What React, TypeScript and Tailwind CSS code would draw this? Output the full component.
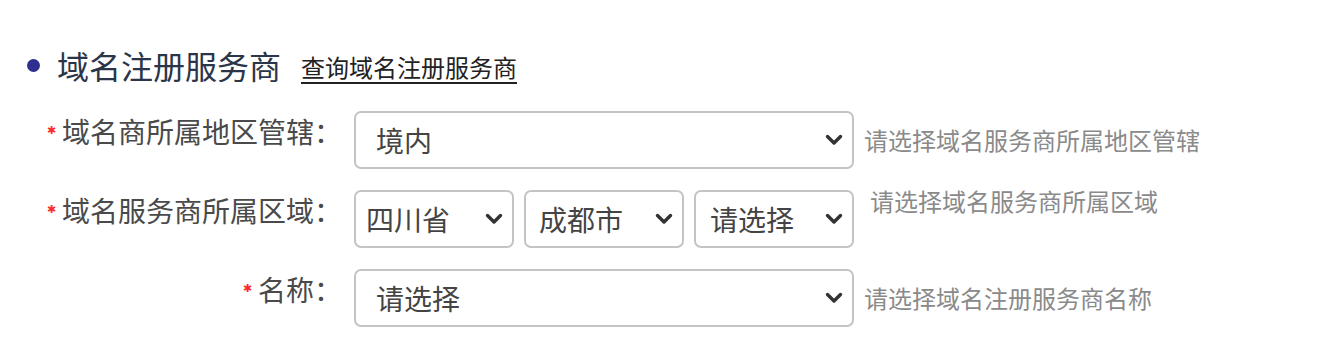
import React from "react";

const font = { fontFamily: '"Noto Sans CJK SC", "Noto Sans", sans-serif' };

function Chevron() {
  return (
    <svg width="18" height="12" viewBox="0 0 18 12" className="shrink-0">
      <path d="M2.5 2.5 L9 9 L15.5 2.5" fill="none" stroke="#333" strokeWidth="3.4" strokeLinecap="round" strokeLinejoin="round" />
    </svg>
  );
}

function Select({ text, w, pl }: { text: string; w: string; pl: string }) {
  return (
    <div className={`${w} ${pl} h-[58px] shrink-0 flex items-center justify-between pr-[9px] border-2 border-[#c4c4c4] rounded-[7px] bg-white text-[28px] text-[#444]`}>
      <span className="leading-none">{text}</span>
      <Chevron />
    </div>
  );
}

function Label({ text }: { text: string }) {
  return (
    <div className="w-[342px] shrink-0 flex justify-end items-center -mt-[1px] h-[42px] text-[28px] text-[#4a4a4a] leading-[42px]">
      <span className="text-[#ff2a2a] text-[11px] leading-none mr-[6px] -mt-[4px]">✱</span>
      <span>{text}：</span>
    </div>
  );
}

export default function App() {
  return (
    <div className="w-[1320px] h-[354px] bg-white relative overflow-hidden" style={font}>
      <div className="pt-[43px] pl-[27px]">
        <div className="flex items-center h-[44px]">
          <div className="w-[13px] h-[13px] rounded-full bg-[#2e2f8f] mr-[17px]" />
          <span className="text-[32px] text-[#2b3549] leading-none">域名注册服务商</span>
          <span className="ml-[20px] text-[24px] text-[#222] underline underline-offset-[5px] leading-none mt-[3px]">查询域名注册服务商</span>
        </div>
      </div>
      <div className="mt-[24px] flex flex-col gap-[21px]">
        <div className="flex items-start">
          <Label text="域名商所属地区管辖" />
          <div className="ml-[12px] flex items-center">
            <Select text="境内" w="w-[500px]" pl="pl-[20px]" />
            <span className="ml-[10px] text-[24px] text-[#8a8a8a] leading-none">请选择域名服务商所属地区管辖</span>
          </div>
        </div>
        <div className="flex items-start">
          <Label text="域名服务商所属区域" />
          <div className="ml-[12px] flex items-start gap-[10px]">
            <Select text="四川省" w="w-[160px]" pl="pl-[10px]" />
            <Select text="成都市" w="w-[160px]" pl="pl-[13px]" />
            <Select text="请选择" w="w-[160px]" pl="pl-[14px]" />
            <span className="ml-[6px] -mt-[1px] text-[24px] text-[#8a8a8a] leading-[24px]">请选择域名服务商所属区域</span>
          </div>
        </div>
        <div className="flex items-start">
          <Label text="名称" />
          <div className="ml-[12px] flex items-center">
            <Select text="请选择" w="w-[500px]" pl="pl-[20px]" />
            <span className="ml-[10px] text-[24px] text-[#8a8a8a] leading-none">请选择域名注册服务商名称</span>
          </div>
        </div>
      </div>
    </div>
  );
}
